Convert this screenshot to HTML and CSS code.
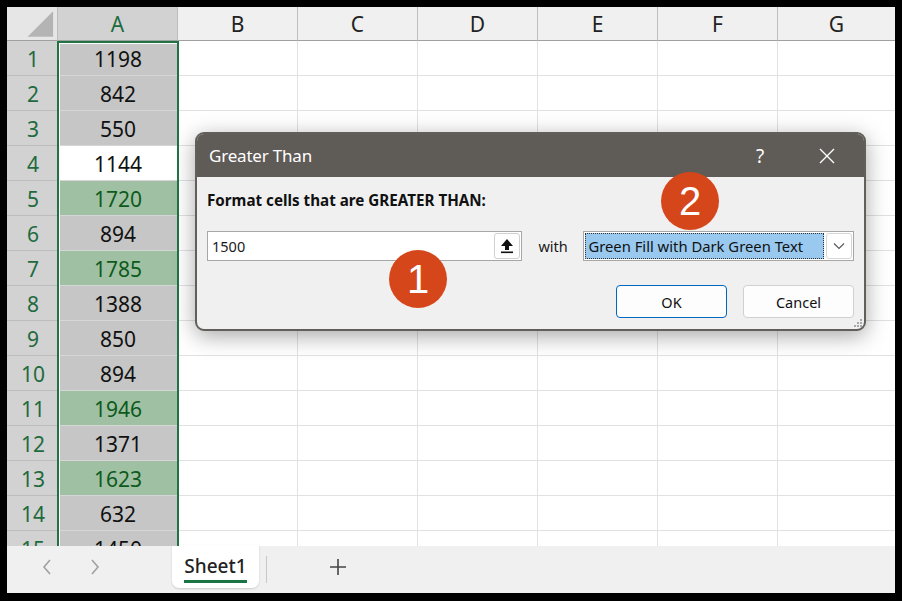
FILE: index.html
```html
<!DOCTYPE html>
<html>
<head>
<meta charset="utf-8">
<link rel="stylesheet" href="styles.css">
</head>
<body>
<div class="app">
  <div class="sheet">
    <div class="grid">
      <div class="corner"><svg width="51" height="34" viewBox="0 0 51 34"><polygon points="47,4 47,30 21,30" fill="#b4b4b4"/></svg></div>
      <div class="ch sel">A</div><div class="ch">B</div><div class="ch">C</div><div class="ch">D</div><div class="ch">E</div><div class="ch">F</div><div class="ch last">G</div>

      <div class="rh">1</div><div class="c a">1198</div><div class="c"></div><div class="c"></div><div class="c"></div><div class="c"></div><div class="c"></div><div class="c last"></div>
      <div class="rh">2</div><div class="c a">842</div><div class="c"></div><div class="c"></div><div class="c"></div><div class="c"></div><div class="c"></div><div class="c last"></div>
      <div class="rh">3</div><div class="c a">550</div><div class="c"></div><div class="c"></div><div class="c"></div><div class="c"></div><div class="c"></div><div class="c last"></div>
      <div class="rh">4</div><div class="c a active">1144</div><div class="c"></div><div class="c"></div><div class="c"></div><div class="c"></div><div class="c"></div><div class="c last"></div>
      <div class="rh">5</div><div class="c a g">1720</div><div class="c"></div><div class="c"></div><div class="c"></div><div class="c"></div><div class="c"></div><div class="c last"></div>
      <div class="rh">6</div><div class="c a">894</div><div class="c"></div><div class="c"></div><div class="c"></div><div class="c"></div><div class="c"></div><div class="c last"></div>
      <div class="rh">7</div><div class="c a g">1785</div><div class="c"></div><div class="c"></div><div class="c"></div><div class="c"></div><div class="c"></div><div class="c last"></div>
      <div class="rh">8</div><div class="c a">1388</div><div class="c"></div><div class="c"></div><div class="c"></div><div class="c"></div><div class="c"></div><div class="c last"></div>
      <div class="rh">9</div><div class="c a">850</div><div class="c"></div><div class="c"></div><div class="c"></div><div class="c"></div><div class="c"></div><div class="c last"></div>
      <div class="rh">10</div><div class="c a">894</div><div class="c"></div><div class="c"></div><div class="c"></div><div class="c"></div><div class="c"></div><div class="c last"></div>
      <div class="rh">11</div><div class="c a g">1946</div><div class="c"></div><div class="c"></div><div class="c"></div><div class="c"></div><div class="c"></div><div class="c last"></div>
      <div class="rh">12</div><div class="c a">1371</div><div class="c"></div><div class="c"></div><div class="c"></div><div class="c"></div><div class="c"></div><div class="c last"></div>
      <div class="rh">13</div><div class="c a g">1623</div><div class="c"></div><div class="c"></div><div class="c"></div><div class="c"></div><div class="c"></div><div class="c last"></div>
      <div class="rh">14</div><div class="c a">632</div><div class="c"></div><div class="c"></div><div class="c"></div><div class="c"></div><div class="c"></div><div class="c last"></div>
      <div class="rh">15</div><div class="c a">1450</div><div class="c"></div><div class="c"></div><div class="c"></div><div class="c"></div><div class="c"></div><div class="c last"></div>
    </div>
    <div class="selbox"></div>
  </div>

  <div class="tabs">
    <div class="nav">
      <svg width="12" height="18" viewBox="0 0 12 18"><polyline points="9,2 3,9 9,16" fill="none" stroke="#a0a0a0" stroke-width="1.6"/></svg>
      <svg width="12" height="18" viewBox="0 0 12 18"><polyline points="3,2 9,9 3,16" fill="none" stroke="#a0a0a0" stroke-width="1.6"/></svg>
    </div>
    <div class="tab"><span class="tabname">Sheet1</span></div>
    <div class="sep"></div>
    <div class="plus"><svg width="18" height="18" viewBox="0 0 18 18"><path d="M9 1V17M1 9H17" stroke="#444" stroke-width="1.6"/></svg></div>
  </div>

  <div class="dialog">
    <div class="titlebar">
      <span class="title">Greater Than</span>
      <span class="help">?</span>
      <span class="close"><svg width="16" height="16" viewBox="0 0 16 16"><path d="M1 1L15 15M15 1L1 15" stroke="#fff" stroke-width="1.4"/></svg></span>
    </div>
    <div class="dbody">
      <div class="label">Format cells that are GREATER THAN:</div>
      <div class="inrow">
        <div class="input">
          <span class="val">1500</span>
          <span class="refbtn"><svg width="14" height="16" viewBox="0 0 14 16"><polygon points="7,1 13,8 9,8 9,12 5,12 5,8 1,8" fill="#111"/><rect x="1" y="13.5" width="12" height="1.6" fill="#111"/></svg></span>
        </div>
        <span class="with">with</span>
        <div class="select">
          <span class="opt">Green Fill with Dark Green Text</span>
          <span class="drop"><svg width="12" height="8" viewBox="0 0 12 8"><polyline points="1,1.5 6,6.5 11,1.5" fill="none" stroke="#555" stroke-width="1.1"/></svg></span>
        </div>
      </div>
      <div class="btnrow">
        <div class="btn ok">OK</div>
        <div class="btn">Cancel</div>
      </div>
    </div>
    <svg class="grip" width="10" height="10" viewBox="0 0 10 10"><g fill="#a8a8a8"><rect x="7" y="1" width="2" height="2"/><rect x="4" y="4" width="2" height="2"/><rect x="7" y="4" width="2" height="2"/><rect x="1" y="7" width="2" height="2"/><rect x="4" y="7" width="2" height="2"/><rect x="7" y="7" width="2" height="2"/></g></svg>
  </div>

  <div class="badge b1">1</div>
  <div class="badge b2">2</div>
</div>
</body>
</html>
```
FILE: styles.css
```css
html, body {
  margin: 0;
  padding: 0;
  background: #000;
}
body {
  width: 902px;
  height: 601px;
  overflow: hidden;
  font-family: "Noto Sans", "Liberation Sans", sans-serif;
}
.app {
  position: relative;
  margin: 7px;
  width: 888px;
  height: 586px;
  background: #fff;
  overflow: hidden;
}
.sheet {
  position: relative;
  height: 539px;
  overflow: hidden;
}
.grid {
  display: grid;
  grid-template-columns: 51px repeat(6, 120px) 117px;
  grid-template-rows: 34px repeat(15, 35px);
}
.grid > div {
  box-sizing: border-box;
  display: flex;
  align-items: center;
  justify-content: center;
}
.corner {
  background: #e6e6e6;
  border-right: 1px solid #bdbdbd;
  border-bottom: 1px solid #a0a0a0;
}
.corner svg { display: block; }
.ch {
  background: #f0f0f0;
  border-right: 1px solid #bdbdbd;
  border-bottom: 1px solid #a0a0a0;
  font-size: 21px;
  color: #222;
  padding-top: 1px;
}
.ch.sel {
  background: #d2d2d2;
  color: #1e6b3e;
}
.ch.last, .c.last { border-right: none; }
.rh {
  background: #d2d2d2;
  border-bottom: 1px solid #bcbcbc;
  border-right: 1px solid #bdbdbd;
  color: #1e6b3e;
  font-size: 21px;
  padding-top: 2px;
  padding-left: 2px;
}
.c {
  border-right: 1px solid #e1e1e1;
  border-bottom: 1px solid #e1e1e1;
  font-size: 21px;
  color: #111;
  padding-top: 2px;
}
.c.a {
  background: #c6c6c6;
  border-bottom: 1px solid #d6d6d6;
  border-right: none;
}
.c.a.g {
  background: #9fc0a2;
  color: #0d5a1d;
}
.c.a.active {
  background: #fff;
}
.selbox {
  position: absolute;
  left: 50px;
  top: 34px;
  width: 122px;
  height: 600px;
  box-sizing: border-box;
  border: 2px solid #217346;
  box-shadow: inset 1px 1px 0 #fff;
  pointer-events: none;
}

/* tab bar */
.tabs {
  height: 47px;
  background: #f0f0f0;
  display: flex;
  align-items: flex-start;
}
.nav {
  width: 165px;
  display: flex;
  align-items: center;
  gap: 36px;
  padding-left: 34px;
  box-sizing: border-box;
  height: 42px;
}
.nav svg { display: block; }
.tab {
  width: 87px;
  height: 43px;
  margin-top: -1px;
  background: #fff;
  border-radius: 0 0 7px 7px;
  box-shadow: 0 1px 2px rgba(0,0,0,0.15);
  display: flex;
  justify-content: center;
  align-items: center;
}
.tabname {
  font-size: 19px;
  font-weight: 500;
  color: #222;
  line-height: 24px;
  border-bottom: 3px solid #1a7343;
  padding-bottom: 2px;
  margin-top: 4px;
}
.sep {
  width: 1px;
  height: 27px;
  background: #c8c8c8;
  margin: 10px 0 0 7px;
}
.plus {
  margin: 12px 0 0 62px;
}
.plus svg { display: block; }

/* dialog */
.dialog {
  position: absolute;
  left: 188px;
  top: 125px;
  width: 671px;
  height: 199px;
  box-sizing: border-box;
  background: #f0f0f0;
  border: 2px solid #625e5a;
  border-radius: 9px;
  box-shadow: 0 5px 22px rgba(0,0,0,0.35);
  overflow: hidden;
}
.titlebar {
  height: 43px;
  background: #5f5b57;
  display: flex;
  align-items: center;
  color: #fff;
  padding-left: 12px;
}
.title {
  font-size: 17px;
  letter-spacing: -0.2px;
  flex: 1;
}
.help {
  font-size: 19px;
  width: 20px;
  margin-right: 43px;
}
.close {
  width: 16px;
  height: 16px;
  margin-right: 29px;
}
.close svg { display: block; }
.dbody {
  padding: 13px 10px 0 10px;
}
.label {
  font-weight: 700;
  font-size: 15.2px;
  line-height: 20px;
  color: #111;
  padding-left: 0;
}
.inrow {
  display: flex;
  align-items: center;
  margin-top: 21px;
  height: 30px;
}
.input {
  width: 317px;
  height: 30px;
  box-sizing: border-box;
  background: #fff;
  border: 1px solid #a7a7a7;
  display: flex;
  align-items: center;
  justify-content: space-between;
}
.val {
  font-size: 14.5px;
  color: #1a1a1a;
  padding-left: 4px;
}
.refbtn {
  width: 26px;
  height: 26px;
  box-sizing: border-box;
  border: 1px solid #d0d0d0;
  border-radius: 3px;
  background: #fff;
  margin-right: 1px;
  display: flex;
  align-items: center;
  justify-content: center;
}
.refbtn svg { display: block; }
.with {
  padding-left: 16px;
  font-size: 14.5px;
  color: #1a1a1a;
  width: 29px;
}
.select {
  margin-left: 16px;
  width: 272px;
  height: 30px;
  box-sizing: border-box;
  background: #fff;
  border: 1px solid #a7a7a7;
  display: flex;
  align-items: center;
  padding: 1px;
}
.opt {
  flex: 1;
  height: 26px;
  box-sizing: border-box;
  background: #99c9ef;
  border: 1px dotted #333;
  font-size: 14.8px;
  color: #111;
  line-height: 24px;
  padding-left: 2px;
}
.drop {
  width: 26px;
  height: 26px;
  margin-left: 2px;
  box-sizing: border-box;
  border: 1px solid #d6d6d6;
  border-radius: 3px;
  display: flex;
  align-items: center;
  justify-content: center;
}
.drop svg { display: block; }
.btnrow {
  display: flex;
  justify-content: flex-end;
  gap: 16px;
  margin-top: 24px;
}
.btn {
  width: 111px;
  height: 33px;
  box-sizing: border-box;
  border: 1px solid #d0d0d0;
  border-radius: 4px;
  background: #fdfdfd;
  display: flex;
  align-items: center;
  justify-content: center;
  font-size: 14.5px;
  color: #111;
}
.btn.ok {
  border-color: #0067c0;
}
.grip {
  position: absolute;
  right: 1px;
  bottom: 1px;
}

/* badges */
.badge {
  position: absolute;
  width: 58px;
  height: 58px;
  border-radius: 50%;
  background: #d6461b;
  color: #fff;
  font-family: "Liberation Sans", sans-serif;
  font-size: 40px;
  line-height: 58px;
  text-align: center;
}
.b1 { left: 382px; top: 243px; }
.b2 { left: 654px; top: 165px; }
```
